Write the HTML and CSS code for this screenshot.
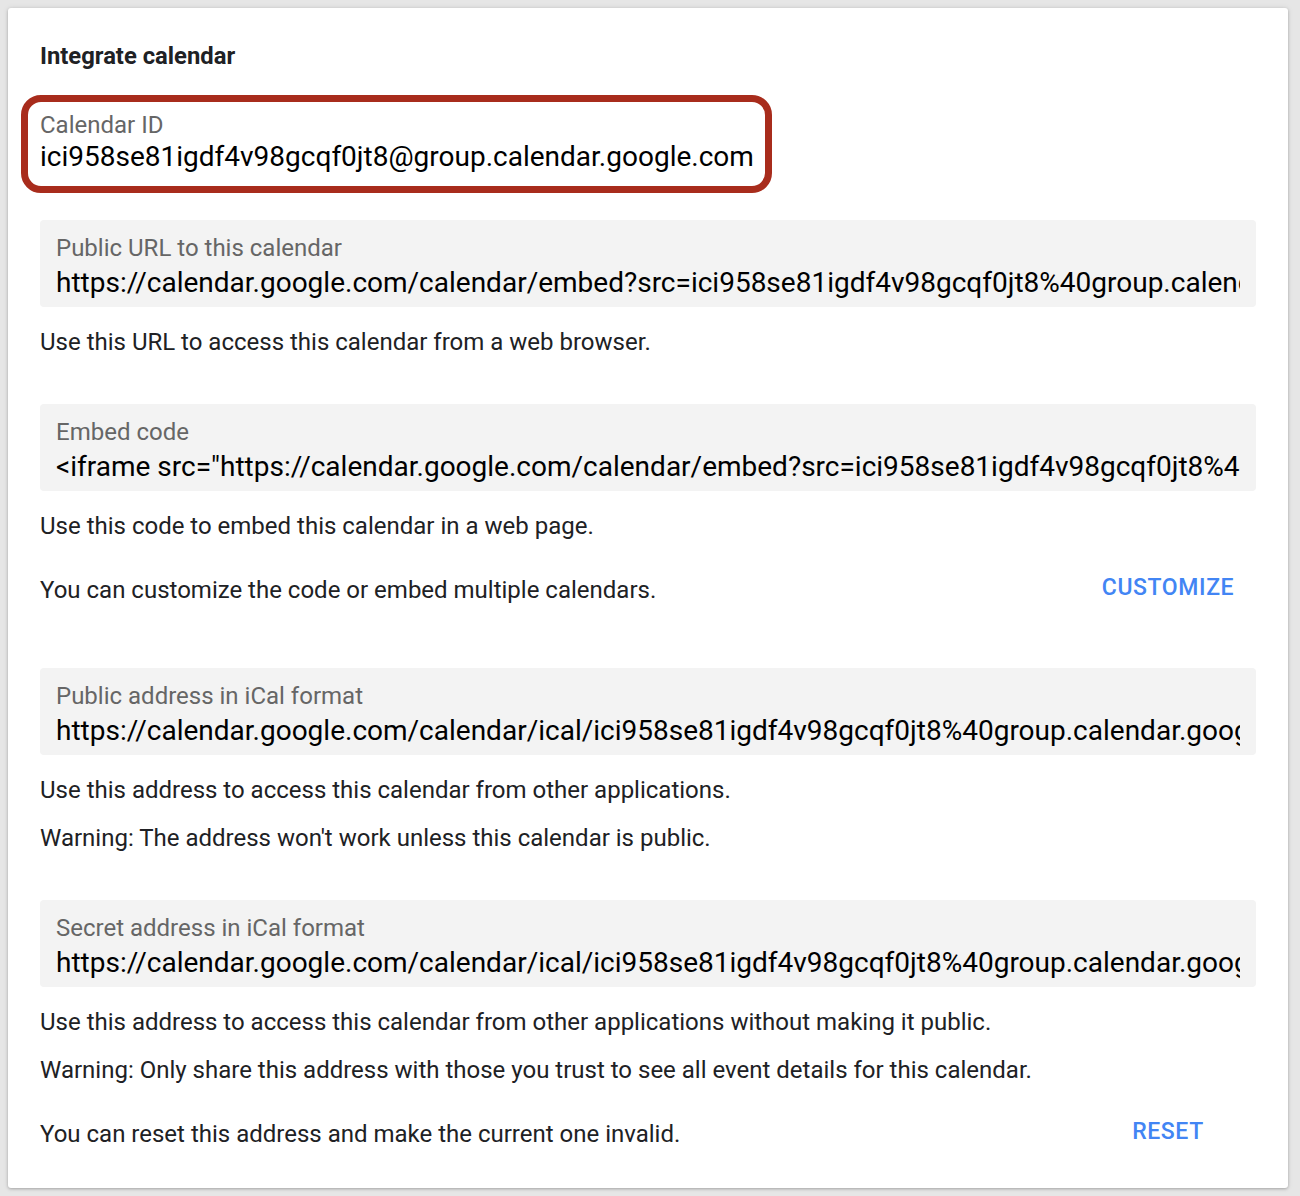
FILE: index.html
```html
<!DOCTYPE html>
<html>
<head>
<meta charset="utf-8">
<link rel="stylesheet" href="styles.css">
</head>
<body>
<div class="card">
  <h2 class="title">Integrate calendar</h2>

  <div class="id-block">
    <div class="label">Calendar ID</div>
    <div class="id-value">ici958se81igdf4v98gcqf0jt8@group.calendar.google.com</div>
    <div class="highlight"></div>
  </div>

  <div class="field f1">
    <div class="label">Public URL to this calendar</div>
    <div class="value">https://calendar.google.com/calendar/embed?src=ici958se81igdf4v98gcqf0jt8%40group.calendar.google.com&amp;ctz=America%2FLos_Angeles</div>
  </div>
  <p class="help h-first">Use this URL to access this calendar from a web browser.</p>

  <div class="field f2">
    <div class="label">Embed code</div>
    <div class="value">&lt;iframe src="https://calendar.google.com/calendar/embed?src=ici958se81igdf4v98gcqf0jt8%40group.calendar.google.com&amp;ctz=America%2FLos_Angeles" style="border: 0" width="800" height="600" frameborder="0" scrolling="no"&gt;&lt;/iframe&gt;</div>
  </div>
  <p class="help h-first">Use this code to embed this calendar in a web page.</p>
  <div class="action-row">
    <span class="help-text">You can customize the code or embed multiple calendars.</span>
    <span class="btn">CUSTOMIZE</span>
  </div>

  <div class="field f3">
    <div class="label">Public address in iCal format</div>
    <div class="value">https://calendar.google.com/calendar/ical/ici958se81igdf4v98gcqf0jt8%40group.calendar.google.com/public/basic.ics</div>
  </div>
  <p class="help h-first">Use this address to access this calendar from other applications.</p>
  <p class="help h-next">Warning: The address won't work unless this calendar is public.</p>

  <div class="field f2">
    <div class="label">Secret address in iCal format</div>
    <div class="value">https://calendar.google.com/calendar/ical/ici958se81igdf4v98gcqf0jt8%40group.calendar.google.com/private-0123456789abcdef/basic.ics</div>
  </div>
  <p class="help h-first">Use this address to access this calendar from other applications without making it public.</p>
  <p class="help h-next">Warning: Only share this address with those you trust to see all event details for this calendar.</p>
  <div class="action-row">
    <span class="help-text">You can reset this address and make the current one invalid.</span>
    <span class="btn">RESET</span>
  </div>
</div>
</body>
</html>
```

FILE: styles.css
```css
html, body {
  margin: 0;
  padding: 0;
}
body {
  background: #e6e6e6;
  font-family: Roboto, "Liberation Sans", Arial, sans-serif;
  color: #202124;
  padding: 8px 12px 8px 8px;
}
.card {
  background: #ffffff;
  border-radius: 3px;
  box-shadow: 0 1px 3px rgba(0,0,0,0.25), 0 0 6px rgba(0,0,0,0.08);
  padding: 32px 32px 39px 32px;
}
.title {
  margin: 0;
  font-size: 23.8px;
  font-weight: 700;
  line-height: 32px;
  color: #202124;
}
.label {
  font-size: 24px;
  line-height: 28px;
  color: #666666;
  white-space: nowrap;
}
.id-block {
  position: relative;
  margin-top: 39px;
}
.id-value {
  font-size: 28px;
  line-height: 34px;
  padding-top: 1px;
  color: #000;
  white-space: nowrap;
}
.highlight {
  position: absolute;
  left: -19px;
  top: -16px;
  width: 737px;
  height: 84px;
  border: 7px solid #a82c1c;
  border-radius: 20px;
  pointer-events: none;
}
.field {
  background: #f3f3f3;
  border-radius: 4px;
  padding: 14px 16px 5px 16px;
  overflow: hidden;
}
.field.f1 { margin-top: 46px; }
.field.f2 { margin-top: 47px; }
.field.f3 { margin-top: 63px; }
.value {
  font-size: 28px;
  line-height: 40px;
  padding-top: 1px;
  margin-bottom: -1px;
  color: #000;
  white-space: nowrap;
  overflow: hidden;
}
.help {
  margin: 0;
  font-size: 24px;
  line-height: 30px;
  color: #202124;
}
.h-first { margin-top: 20px; }
.h-next { margin-top: 18px; }
.action-row {
  display: flex;
  align-items: center;
  justify-content: space-between;
  margin-top: 34px;
}
.help-text {
  font-size: 24px;
  line-height: 30px;
}
.btn {
  width: 176px;
  text-align: center;
  font-size: 23px;
  font-weight: 500;
  letter-spacing: 0.6px;
  color: #4285f4;
  line-height: 30px;
  position: relative;
  top: -2px;
}
```
